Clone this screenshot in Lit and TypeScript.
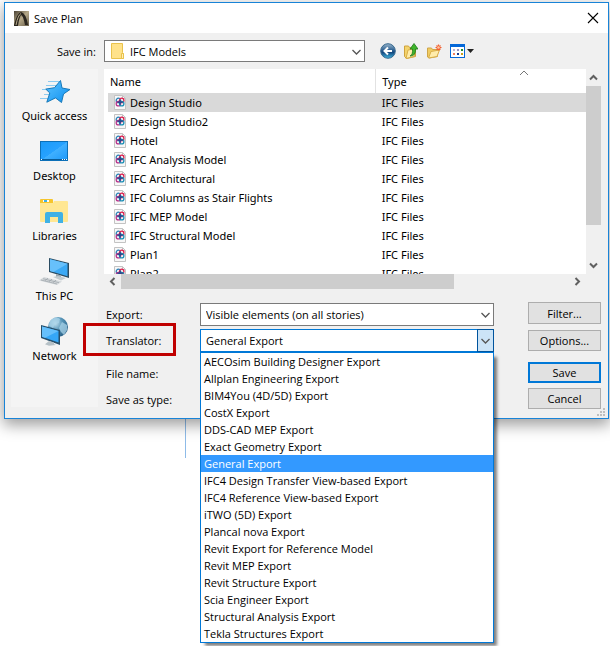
import { LitElement, html, css, svg } from "lit";
import { customElement, state } from "lit/decorators.js";
import { classMap } from "lit/directives/class-map.js";

const PLACES = ["Quick access", "Desktop", "Libraries", "This PC", "Network"];

const FILES = [
  "Design Studio",
  "Design Studio2",
  "Hotel",
  "IFC Analysis Model",
  "IFC Architectural",
  "IFC Columns as Stair Flights",
  "IFC MEP Model",
  "IFC Structural Model",
  "Plan1",
  "Plan2",
];

const TRANSLATORS = [
  "AECOsim Building Designer Export",
  "Allplan Engineering Export",
  "BIM4You (4D/5D) Export",
  "CostX Export",
  "DDS-CAD MEP Export",
  "Exact Geometry Export",
  "General Export",
  "IFC4 Design Transfer View-based Export",
  "IFC4 Reference View-based Export",
  "iTWO (5D) Export",
  "Plancal nova Export",
  "Revit Export for Reference Model",
  "Revit MEP Export",
  "Revit Structure Export",
  "Scia Engineer Export",
  "Structural Analysis Export",
  "Tekla Structures Export",
];

const placeArt: Record<string, unknown> = {
  "Quick access": svg`
    <defs><linearGradient id="s" x1="0" y1="0" x2="1" y2="1"><stop offset="0" stop-color="#5cc4ff"/><stop offset="1" stop-color="#0d8ff0"/></linearGradient></defs>
    <path d="M9 5.500h11M7 9.500h11M3 13.500h6M5 18.500h8M1 22.500h9" stroke="#8ccbf0"/>
    <path d="M21.500 4.500l1.500 7.500 8 1.500-6.500 4.500-2 8.500-6-4.600-8.700 4.300 3-9.200-4-3.900 8.700-1.400z" fill="url(#s)" stroke="#1678b8"/>`,
  Desktop: svg`
    <defs><linearGradient id="d" x1="0" y1="0" x2="1" y2="1"><stop offset="0" stop-color="#1a9af8"/><stop offset=".5" stop-color="#27a2ff"/><stop offset=".51" stop-color="#40b0ff"/><stop offset="1" stop-color="#1b98fa"/></linearGradient></defs>
    <rect x="1.500" y="5.500" width="27" height="19" fill="url(#d)" stroke="#0c70b8"/>
    <path d="M2 23.500h26" stroke="#0a5c98"/>
    <path d="M2 23.500h1M23 23.500h1M25 23.500h1M27 23.500h1" stroke="#fff"/>`,
  Libraries: svg`
    <path d="M1 4q0-1 1-1h11q1 0 1 1v3H1z" fill="#f6c52c"/>
    <path d="M4 4h6v2H4z" fill="#fff"/><path d="M5 4h3v2H5z" fill="#3fb1e5"/>
    <path d="M1 7h13l1-2h13q1 0 1 1v19q0 1-1 1H2q-1 0-1-1z" fill="#ffe793"/>
    <path d="M6 27v-9q0-2 2-2h14q2 0 2 2v9h-5v-6h-8v6z" fill="#3fb1e5"/>`,
  "This PC": svg`
    <path d="M10 2l20 5v15l-20-6z" fill="#2b4c62"/>
    <path d="M11 3.200l17.500 4.500v12.600L11 15z" fill="#3ba9f5"/>
    <path d="M11 3.200l17.500 4.500-14 8.300L11 15z" fill="#67c0fb"/>
    <path d="M17 18l5 1.500v3l-5-1z" fill="#9aa7ae"/><path d="M14 21l5-1 8 2-5 2.500z" fill="#c3ccd0"/>
    <path d="M0 24.500l5-3.500 18 4.500-5 3.500z" fill="#d5d9dc"/>
    <path d="M2 24l16 4M4 22.700l16 4M6 24.600l3-2.500M10 25.600l3-2.500M14 26.600l3-2.500" stroke="#9ba2a7" stroke-width=".7"/>`,
  Network: svg`
    <defs><radialGradient id="g" cx=".35" cy=".3" r=".75"><stop offset="0" stop-color="#c6e4f2"/><stop offset=".5" stop-color="#5795b8"/><stop offset="1" stop-color="#285f85"/></radialGradient></defs>
    <circle cx="19" cy="11" r="10" fill="url(#g)"/>
    <path d="M13 3q5-3 8 0l-1 4-4 1-2 4-4-2q0-5 3-7zM23 6l5 3v5l-3 5-3-3-2-4z" fill="#a9d3e8" opacity=".75"/>
    <path d="M2 9l19 5v15L2 22z" fill="#27506c"/><path d="M3 10.400l16.500 4.500v11.600L3 20.800z" fill="#35a7f7"/>
    <path d="M3 10.400l16.500 4.500L6 21.800 3 20.800z" fill="#66c0fb"/>
    <path d="M10 25l5 1.500V28l2 1-7 .8-4-1.600z" fill="#b5c0c6"/>`,
};

const chevron = (d: string, w = 9, h = 9) => html`<svg class="chev" width=${w} height=${h} viewBox="0 0 ${w} ${h}" aria-hidden="true"><path d=${d}/></svg>`;

const fileIcon = html`<svg class="doc" width="12" height="15" viewBox="0 0 12 15" aria-hidden="true">
  <path d="M.5.500h8l3 3v11H.5z" fill="#f7f7f7" stroke="#c3c3c3"/><path d="M8.500.500v3h3" fill="none" stroke="#c3c3c3"/>
  <g fill="none" stroke-width="1.300"><circle cx="4.400" cy="5.400" r="2.200" stroke="#2a82b8"/><circle cx="7.700" cy="5.400" r="2.200" stroke="#e0204f"/><circle cx="4.400" cy="8.700" r="2.200" stroke="#b8358b"/><circle cx="7.700" cy="8.700" r="2.200" stroke="#1f8fb5"/><path d="M3.500 7.100h5.200M6.100 5v4.400" stroke="#28458c"/></g>
</svg>`;

@customElement("app-root")
export class SaveDialog extends LitElement {
  @state() private selectedFile = 0;
  @state() private translator = "General Export";

  static styles = css`
    :host { display: block; min-height: 100vh; padding: 2px 1px 0 4px; box-sizing: border-box; background: #fff; overflow: hidden;
      font: 11px/15px "Open Sans", "Noto Sans", sans-serif; color: #000; }
    *, *::before, *::after { box-sizing: border-box; }
    svg { display: block; flex: none; }
    button, input, select { font: inherit; color: inherit; margin: 0; border-radius: 0; }
    .dialog { position: relative; border: 1px solid #1883d7; background: #f0f0f0; box-shadow: 0 5px 14px 1px rgba(0,0,0,.38); }
    .title { display: flex; align-items: center; height: 30px; padding: 0 9px; background: #fff; gap: 5px; }
    .title h1 { flex: 1; margin: 0; font: inherit; }
    .plain { border: 0; padding: 0; background: none; display: flex; align-items: center; }
    .bar { display: grid; grid-template-columns: 93px 261px 1fr; column-gap: 6px; align-items: center; padding: 7px 0 7px; }
    .bar > label { text-align: right; padding-right: 2px; }
    .tools { display: flex; gap: 8px; padding-left: 9px; align-items: center; }
    .pick { position: relative; display: flex; height: 23px; }
    .pick select, .text { appearance: none; width: 100%; height: 100%; border: 1px solid #7a7a7a; background: #fff; padding: 0 20px 0 5px; outline: 0; }
    .pick .chev { position: absolute; right: 4px; top: 8px; }
    .chev { fill: none; stroke: #555; stroke-width: 1.3; }
    .pick.folder { height: 22px; }
    .folder select { padding-left: 25px; }
    .folder .fold { position: absolute; left: 7px; top: 3px; }
    .cols { display: flex; gap: 6px; padding: 0 7px 8px 6px; }
    .places { flex: none; width: 87px; margin-bottom: 3px; padding-top: 7px; background: #f4f4f4; display: flex; flex-direction: column; gap: 13px; }
    .places, table { font-family: "Noto Sans", "Open Sans", sans-serif; }
    .place { flex-direction: column; }
    .main { flex: 1; min-width: 0; }
    .listing { display: grid; grid-template-columns: 1fr 15px; grid-template-rows: 205px 15px; }
    .view { overflow: hidden; background: #fff; padding-left: 4px; }
    table { width: 100%; border-collapse: collapse; table-layout: fixed; }
    th, td { text-align: left; font-weight: 400; padding: 0; height: 19px; }
    th { position: relative; height: 24px; padding-left: 2px; }
    th + th { padding-left: 6px; border-left: 1px solid #e2e2e2; }
    td + td { padding-left: 6px; }
    .c1 { width: 56%; }
    th .chev { position: absolute; left: 50%; margin-left: 38px; top: 0; stroke: #777; stroke-width: 1; }
    .name { display: flex; align-items: center; gap: 4px; padding-left: 6px; }
    .sel { background: #d9d9d9; }
    .vs, .hs { display: flex; align-items: center; justify-content: space-between; }
    .vs { flex-direction: column; padding: 4px 0; }
    .hs { padding: 0 4px; }
    .vs .chev, .hs .chev { stroke-width: 2; stroke: #606060; }
    .thumb { background: #cdcdcd; }
    .vs .thumb { width: 15px; height: 139px; margin-bottom: auto; margin-top: 4px; }
    .hs .thumb { width: 333px; height: 15px; margin-left: 4px; margin-right: auto; }
    .form { display: grid; grid-template-columns: minmax(0, 1fr) 73px; column-gap: 34px; padding-top: 13px; }
    .fields { display: flex; flex-direction: column; padding-top: 1px; gap: 3px; }
    .row { display: grid; grid-template-columns: 96px minmax(0, 1fr); align-items: center; }
    .row > label { position: relative; padding-left: 2px; }
    .low { margin-top: 7px; height: 22px; }
    .low + .low { margin-top: 1px; }
    .marked::before { content: ""; position: absolute; left: -21px; top: -10px; width: 93px; height: 33px; border: 3px solid #c00000; }
    .pick.open select { border-color: #0078d7; }
    .pick.open::after { content: ""; position: absolute; right: 0; top: 0; width: 17px; height: 100%; background: #cce4f7; border: 1px solid #00549d; }
    .pick.open .chev { z-index: 1; }
    .popup { position: absolute; z-index: 2; left: 0; right: 0; top: 100%; margin: 0; padding: 0; list-style: none; background: #fff; border: 1px solid #0078d7; box-shadow: 4px 4px 3px -1px rgba(0,0,0,.5); }
    .popup li { height: 17px; line-height: 17px; padding-left: 3px; white-space: nowrap; }
    .popup li.on { background: #3399ff; color: #fff; }
    .acts { display: flex; flex-direction: column; gap: 5px; }
    .btn { height: 21px; padding: 0; line-height: 17px; border: 1px solid #adadad; background: #e1e1e1; }
    .acts .tall { height: 22px; margin-bottom: 1px; }
    .btn.main-act { margin-top: 6px; border: 2px solid #0078d7; line-height: 15px; }
    .grip { position: absolute; right: 3px; bottom: 2px; }
    .behind { width: 1px; height: 39px; margin-left: 181px; background: #8ebbe8; }
  `;

  private sel(cls: string, id: string, options: string[], extra: unknown = "") {
    return html`<div class="pick ${cls}"><select id=${id}>${options.map((o) => html`<option>${o}</option>`)}</select>${chevron("M.500 2l4 4 4-4")}${extra}</div>`;
  }

  render() {
    return html`
      <div class="dialog" role="dialog" aria-labelledby="t">
        <header class="title">
          <svg width="15" height="15" viewBox="0 0 15 15" aria-hidden="true"><defs><linearGradient id="a" x1="0" x2="1" y2="1"><stop offset="0" stop-color="#4a4235"/><stop offset=".5" stop-color="#b5a888"/><stop offset="1" stop-color="#6b604c"/></linearGradient></defs><rect width="15" height="15" fill="url(#a)"/><path d="M0 14Q3 2 7 1q5 1 7 13h-3Q9 4 7 4 5 7 4 15H0z" fill="#2b261e"/><path d="M2 14Q4 4 7 2.500" stroke="#b8ab8b" fill="none"/></svg>
          <h1 id="t">Save Plan</h1>
          <button class="plain" aria-label="Close"><svg width="12" height="12" viewBox="0 0 12 12"><path d="M1 1l10 10M11 1L1 11" stroke="#000" stroke-width="1.100"/></svg></button>
        </header>
        <div class="bar">
          <label for="in">Save in:</label>
          ${this.sel("folder", "in", ["IFC Models"], html`<svg class="fold" width="14" height="17" viewBox="0 0 14 17" aria-hidden="true"><path d="M.5.500h11v9l1 1v5H.5z" fill="#ffe28a" stroke="#e9c24c"/><path d="M10.500 15.500v-5h2v5z" fill="#fff0b8" stroke="#e9c24c"/></svg>`)}
          <div class="tools">
            <button class="plain" aria-label="Back"><svg width="16" height="16" viewBox="0 0 16 16"><defs><linearGradient id="b" x1="0" y1="0" x2="0" y2="1"><stop offset="0" stop-color="#9ab6cc"/><stop offset=".45" stop-color="#2c5f91"/><stop offset=".6" stop-color="#154a80"/><stop offset="1" stop-color="#3fb6e0"/></linearGradient></defs><circle cx="8" cy="8" r="7.300" fill="url(#b)" stroke="#38698f"/><path d="M12 8H5M8 4.500L4.500 8 8 11.500" fill="none" stroke="#fff" stroke-width="2"/></svg></button>
            <button class="plain" aria-label="Up one level"><svg width="14" height="16" viewBox="0 0 14 16"><path d="M.500 3l4 0 1 1.500 6 0v9l-9 2-2-2z" fill="#f3d36c" stroke="#cfa23c"/><path d="M2 15.500L4 7l8-1.500-2 8z" fill="#ffecaa" stroke="#d8ae48"/><path d="M6 13q3-1 2.500-7H6l4-5.500L14 6h-2.500q.5 7-5.500 7z" fill="#3fb52c" stroke="#1d7a1b" stroke-width=".8"/></svg></button>
            <button class="plain" aria-label="New folder"><svg width="16" height="16" viewBox="0 0 16 16"><path d="M1.500 5h4l1 1.500h5v7l-8 1.500-2-1z" fill="#f0cc62" stroke="#cfa548"/><path d="M2.500 15L5 8.500l8.500-1.500-2.500 6.500z" fill="#ffecaa" stroke="#d8ae48"/><path d="M12.500 1.500v6M9.500 4.500h6M10.500 2.500l4 4M14.500 2.500l-4 4" stroke="#f26031" stroke-width="1.200"/><circle cx="12.500" cy="4.500" r="1.300" fill="#ffc4a0"/></svg></button>
            <button class="plain" aria-label="View menu"><svg width="24" height="14" viewBox="0 0 24 14"><rect x=".5" y=".5" width="14" height="13" fill="#fff" stroke="#0568d8"/><path d="M0 0h15v3H0z" fill="#0568d8"/><path d="M3 5h2v2H3z" fill="#b9b3d2"/><path d="M7 5h2v2H7z" fill="#9992c0"/><path d="M11 5h2v2h-2z" fill="#1f8b2c"/><path d="M3 9h2v2H3z" fill="#f0805e"/><path d="M7 9h2v2H7z" fill="#1a3e90"/><path d="M11 9h2v2h-2z" fill="#c8a018"/><path d="M17 5h7l-3.500 4z" fill="#222"/></svg></button>
          </div>
        </div>
        <div class="cols">
          <nav class="places" aria-label="Places">
            ${PLACES.map((p) => html`<button class="plain place"><svg width="32" height="32" viewBox="0 0 32 32" fill="none" aria-hidden="true">${placeArt[p]}</svg><span>${p}</span></button>`)}
          </nav>
          <div class="main">
            <div class="listing">
              <div class="view">
                <table>
                  <thead><tr><th class="c1">Name</th><th>Type${chevron("M1 6l4-4 4 4")}</th></tr></thead>
                  <tbody>${FILES.map((f, i) => html`<tr class=${classMap({ sel: i === this.selectedFile })} @click=${() => (this.selectedFile = i)}><td><span class="name">${fileIcon}${f}</span></td><td>IFC Files</td></tr>`)}</tbody>
                </table>
              </div>
              <div class="vs">${chevron("M1 6.500l3.500-3.500L8 6.500")}<div class="thumb"></div>${chevron("M1 2.500L4.500 6 8 2.500")}</div>
              <div class="hs">${chevron("M6.500 1L3 4.500 6.500 8")}<div class="thumb"></div>${chevron("M2.500 1L6 4.500 2.500 8")}</div>
            </div>
            <form class="form" @submit=${(e: Event) => e.preventDefault()}>
              <div class="fields">
                <div class="row"><label for="ex">Export:</label>${this.sel("", "ex", ["Visible elements (on all stories)"])}</div>
                <div class="row"><label class="marked" for="tr">Translator:</label>${this.sel("open", "tr", [this.translator], html`
                  <ul class="popup" role="listbox" aria-label="Translator">${TRANSLATORS.map((t) => html`<li role="option" aria-selected=${t === this.translator} class=${classMap({ on: t === this.translator })} @click=${() => (this.translator = t)}>${t}</li>`)}</ul>`)}</div>
                <div class="row low"><label for="fn">File name:</label><input class="text" id="fn"></div>
                <div class="row low"><label for="ty">Save as type:</label><select class="text" id="ty"></select></div>
              </div>
              <div class="acts">
                <button class="btn tall" type="button">Filter...</button>
                <button class="btn" type="button">Options...</button>
                <button class="btn main-act">Save</button>
                <button class="btn" type="button">Cancel</button>
              </div>
            </form>
          </div>
        </div>
        <svg class="grip" width="8" height="8" viewBox="0 0 8 8" fill="#bfbfbf" aria-hidden="true"><path d="M6 0h2v2H6zM3 3h2v2H3zM6 3h2v2H6zM0 6h2v2H0zM3 6h2v2H3zM6 6h2v2H6z"/></svg>
      </div>
      <div class="behind"></div>
    `;
  }
}
